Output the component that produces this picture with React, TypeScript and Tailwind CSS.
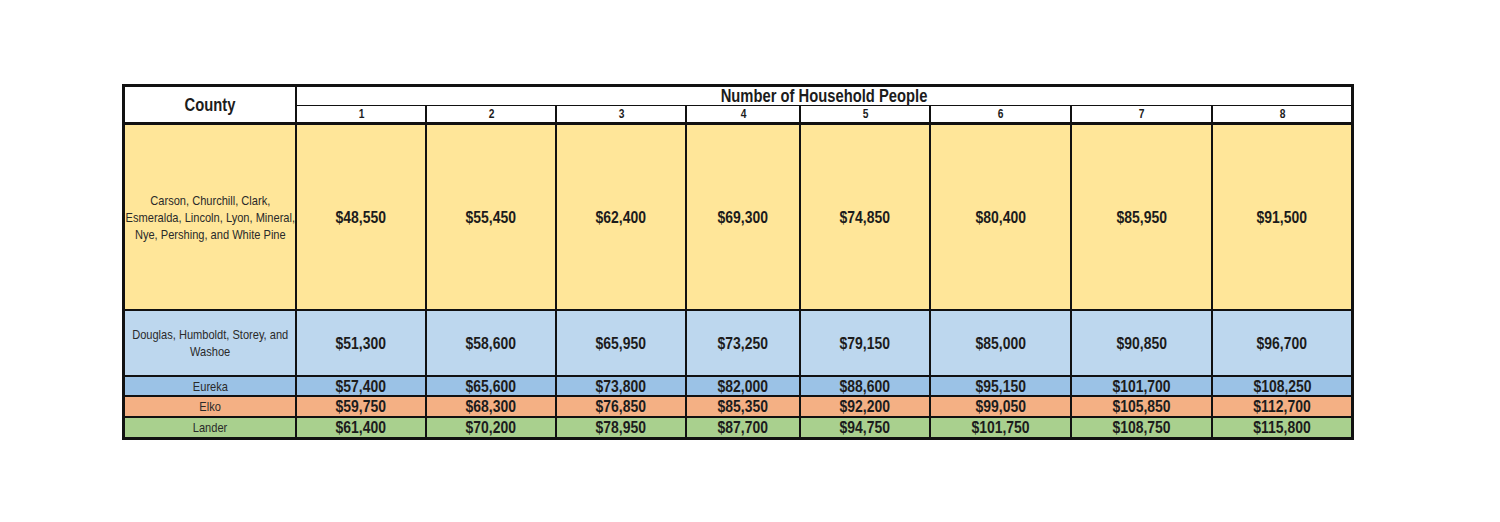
import React from 'react'

const cols = ['1', '2', '3', '4', '5', '6', '7', '8']

// no narrow font installed, so squeeze Liberation Sans to Arial Narrow widths
const narrow = 'inline-block whitespace-nowrap scale-x-[0.82]'

const rows = [
    {
        county: ['Carson, Churchill, Clark,', 'Esmeralda, Lincoln, Lyon, Mineral,', 'Nye, Pershing, and White Pine'],
        values: ['$48,550', '$55,450', '$62,400', '$69,300', '$74,850', '$80,400', '$85,950', '$91,500'],
        bg: 'bg-[#ffe699]',
        height: 'h-[186px]',
    },
    {
        county: ['Douglas, Humboldt, Storey, and', 'Washoe'],
        values: ['$51,300', '$58,600', '$65,950', '$73,250', '$79,150', '$85,000', '$90,850', '$96,700'],
        bg: 'bg-[#bdd7ee]',
        height: 'h-[66px]',
    },
    {
        county: ['Eureka'],
        values: ['$57,400', '$65,600', '$73,800', '$82,000', '$88,600', '$95,150', '$101,700', '$108,250'],
        bg: 'bg-[#9bc2e6]',
        height: 'h-[20px]',
    },
    {
        county: ['Elko'],
        values: ['$59,750', '$68,300', '$76,850', '$85,350', '$92,200', '$99,050', '$105,850', '$112,700'],
        bg: 'bg-[#f4b084]',
        height: 'h-[21px]',
    },
    {
        county: ['Lander'],
        values: ['$61,400', '$70,200', '$78,950', '$87,700', '$94,750', '$101,750', '$108,750', '$115,800'],
        bg: 'bg-[#a9d08e]',
        height: 'h-[19px]',
    },
]

const grid = 'grid grid-cols-[172px_130px_130px_130px_114px_130px_141px_141px_138px]'

export default function App() {
    return (
        <div className="min-h-screen w-full bg-white pt-[84px] pl-[122px] [font-family:'Liberation_Sans',Arial,sans-serif] text-[#1c1c1c]">
            <div className="w-[1232px] border-[3px] border-[#111]">
                {/* header */}
                <div className={`${grid} border-b-[3px] border-[#111]`}>
                    <div className="row-span-2 h-[35px] border-r-2 border-[#111] flex items-center justify-center text-[18px] font-bold leading-none">
                        <span className={narrow}>County</span>
                    </div>
                    <div className="col-span-8 h-[19px] border-b border-[#111] flex items-center justify-center text-[18px] font-bold leading-none">
                        <span className={narrow}>Number of Household People</span>
                    </div>
                    {cols.map((c, i) => (
                        <div
                            key={c}
                            className={`h-[16px] flex items-center justify-center text-[12.5px] font-bold leading-none ${i < 7 ? 'border-r-2 border-[#111]' : ''}`}
                        >
                            <span className={narrow}>{c}</span>
                        </div>
                    ))}
                </div>

                {/* body */}
                {rows.map((r, ri) => (
                    <div
                        key={r.county[0]}
                        className={`${grid} ${r.bg} ${r.height} ${ri < rows.length - 1 ? 'border-b-2 border-[#111]' : ''}`}
                    >
                        <div className="border-r-2 border-[#111] flex items-center justify-center text-center text-[13.5px] leading-[17px] text-[#2a2a2a]">
                            <span className={`${narrow} text-center`}>
                                {r.county.map((line, li) => (
                                    <span key={li} className="block">{line}</span>
                                ))}
                            </span>
                        </div>
                        {r.values.map((v, i) => (
                            <div
                                key={i}
                                className={`flex items-center justify-center text-[17px] font-bold leading-none ${i < 7 ? 'border-r-2 border-[#111]' : ''}`}
                            >
                                <span className={narrow}>{v}</span>
                            </div>
                        ))}
                    </div>
                ))}
            </div>
        </div>
    )
}
